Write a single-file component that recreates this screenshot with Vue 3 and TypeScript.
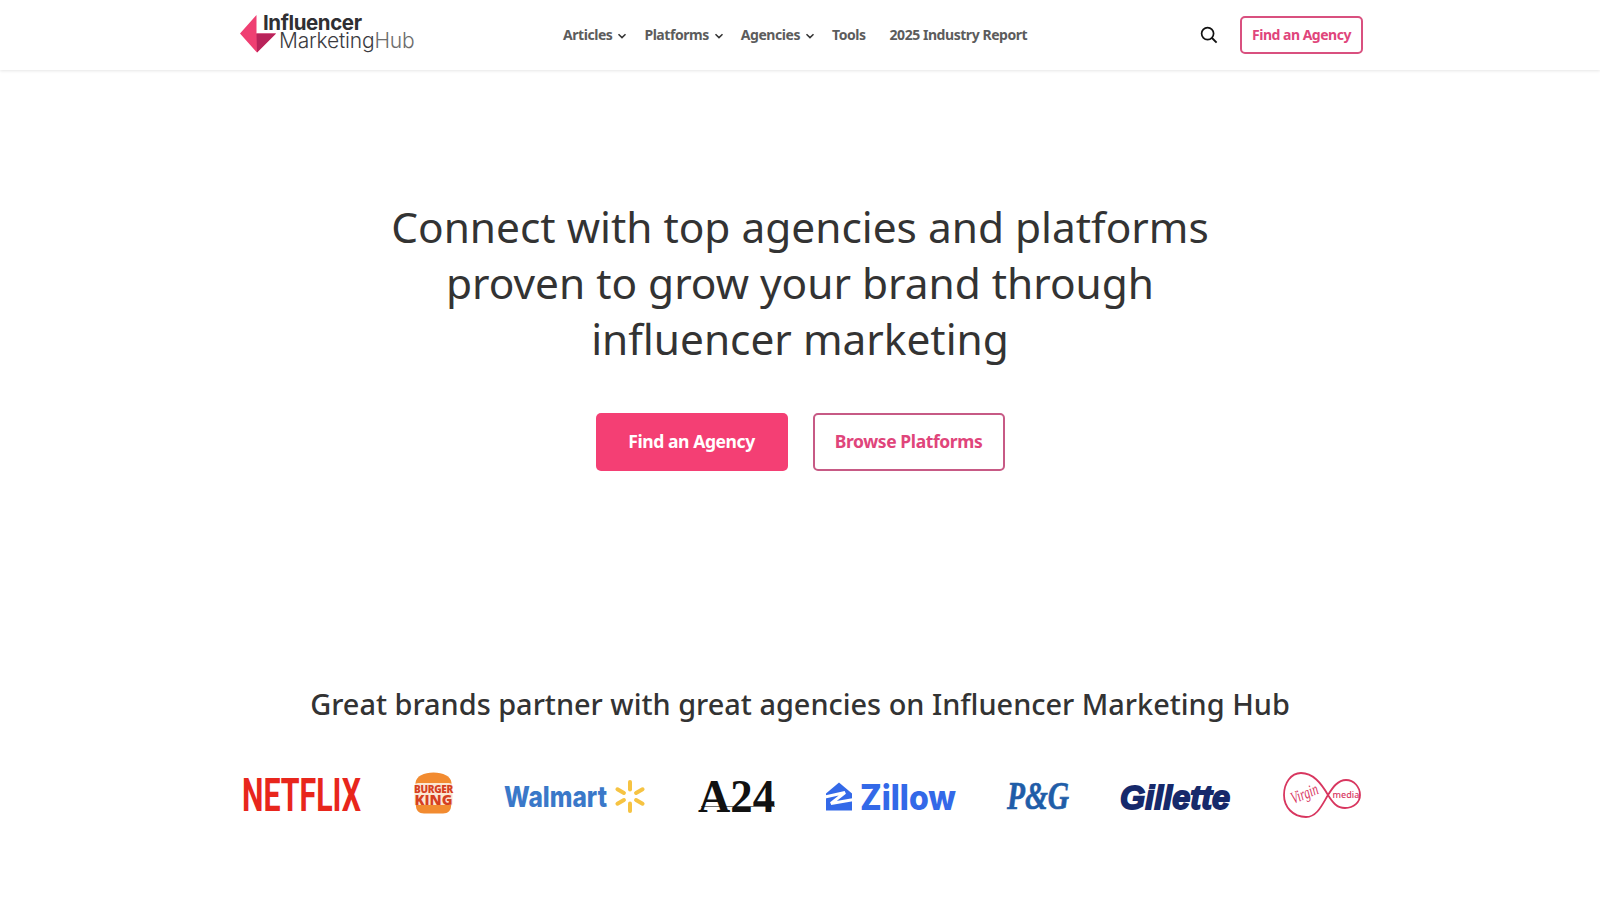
<script setup lang="ts">
interface NavItem { label: string; caret: boolean }
const navItems: NavItem[] = [
  { label: 'Articles', caret: true },
  { label: 'Platforms', caret: true },
  { label: 'Agencies', caret: true },
  { label: 'Tools', caret: false },
  { label: '2025 Industry Report', caret: false },
]
const sparkRays = [0, 60, 120, 180, 240, 300]
</script>

<template>
  <div class="page">
    <header class="topbar">
      <div class="bar-inner">
        <a class="logo" href="#" aria-label="Influencer Marketing Hub">
          <svg width="176" height="42" viewBox="0 0 176 42">
            <polygon points="1,19.500 17.500,1 17.500,19.500 37,19.500 18,38.500" fill="#ef3f72" />
            <polygon points="17.500,19.500 37,19.500 18,38.500" fill="#b8235a" />
            <text class="lg"><tspan x="24" y="15.500" class="lg-top">Influencer</tspan><tspan x="40" y="34" class="lg-bottom">Marketing<tspan fill="#6d6d6d">Hub</tspan></tspan></text>
          </svg>
        </a>
        <nav class="nav">
          <a v-for="item in navItems" :key="item.label" class="nav-link" :class="{ 'has-caret': item.caret }" href="#">
            <span>{{ item.label }}</span>
            <svg v-if="item.caret" class="caret" width="10" height="6" viewBox="0 0 10 6">
              <path d="M1.500 1.200 5 4.600 8.500 1.200" fill="none" stroke="#333" stroke-width="1.500" />
            </svg>
          </a>
        </nav>
        <div class="bar-right">
          <svg class="search" width="18" height="18" viewBox="0 0 18 18">
            <circle cx="7.600" cy="7.600" r="6" fill="none" stroke="#111" stroke-width="1.700" />
            <path d="M12 12 16.600 16.600" stroke="#111" stroke-width="1.900" />
          </svg>
          <a class="btn-small" href="#">Find an Agency</a>
        </div>
      </div>
    </header>

    <section class="hero">
      <h1>Connect with top agencies and platforms<br />proven to grow your brand through<br />influencer marketing</h1>
      <div class="cta">
        <a class="btn btn-solid" href="#">Find an Agency</a>
        <a class="btn btn-outline" href="#">Browse Platforms</a>
      </div>
    </section>

    <section class="brands">
      <h2>Great brands partner with great agencies on Influencer Marketing Hub</h2>
      <div class="logos">
        <svg class="netflix" width="119" height="36" viewBox="0 0 119 36" aria-label="Netflix">
          <text x="2" y="33.500" textLength="119" lengthAdjust="spacingAndGlyphs" class="l-netflix">NETFLIX</text>
        </svg>

        <svg width="39" height="42" viewBox="0 2 39 42" aria-label="Burger King">
          <path d="M1.500 11C2 4 10 0.500 19.500 0.500S37 4 37.500 11C37.500 12.500 36.500 13 35 13H4C2.500 13 1.500 12.500 1.500 11Z" fill="#f28b30" />
          <rect x="0.500" y="11" width="38" height="24" rx="4" fill="#fbe7d2" />
          <path d="M2 33H37C37.500 38 34 41.500 29 41.500H10C5 41.500 1.500 38 2 33Z" fill="#f28b30" />
          <text class="l-bk" text-anchor="middle"><tspan x="19.500" y="20.500" class="l-bk1">BURGER</tspan><tspan x="19.500" y="32.500" class="l-bk2">KING</tspan></text>
        </svg>

        <svg width="143" height="36" viewBox="0 0 143 36" aria-label="Walmart">
          <text x="0" y="29.500" textLength="103" lengthAdjust="spacingAndGlyphs" class="l-walmart">Walmart</text>
          <g transform="translate(126 19.500)">
            <rect v-for="r in sparkRays" :key="r" x="-2" y="-16.500" width="4" height="11.500" rx="2" fill="#f6c342" :transform="`rotate(${r})`" />
          </g>
        </svg>

        <svg width="77" height="36" viewBox="0 0 77 36" aria-label="A24">
          <text x="0" y="35" textLength="77" lengthAdjust="spacingAndGlyphs" class="l-a24">A24</text>
          <path d="M3 29.500H77" stroke="#111" stroke-width="0.600" />
        </svg>

        <svg width="130" height="36" viewBox="0 0 130 36" aria-label="Zillow">
          <g transform="translate(0 2.500)">
            <path d="M13 3 26 14V31H0V14Z" fill="#3369e8" />
            <path d="M-1 17.500 19 13 5 24 28 20" fill="none" stroke="#fff" stroke-width="3" />
          </g>
          <text x="34" y="33" textLength="96" lengthAdjust="spacingAndGlyphs" class="l-zillow">Zillow</text>
        </svg>

        <svg width="62" height="36" viewBox="0 0 62 36" aria-label="P&amp;G">
          <text x="0" y="32" textLength="62" lengthAdjust="spacingAndGlyphs" class="l-pg">P&amp;G</text>
        </svg>

        <svg width="112" height="36" viewBox="0 0 112 36" aria-label="Gillette">
          <text x="0" y="31.500" textLength="110" lengthAdjust="spacingAndGlyphs" class="l-gillette">Gillette</text>
        </svg>

        <svg width="78" height="48" viewBox="0 0 78 48" aria-label="Virgin Media">
          <path d="M45 24C38 12 30 2 18 2 8 2 1 12 1 24 1 36 10 46 23 46 34 46 39 34 45 24 50 16 55 9 63 9 71 9 77 16 77 24 77 31 71 37 62 37 54 37 50 32 45 24Z" fill="none" stroke="#d8365f" stroke-width="1.800" />
          <text x="8" y="28" textLength="28" lengthAdjust="spacingAndGlyphs" transform="rotate(-22 22 24)" class="l-virgin">Virgin</text>
          <text x="63" y="26.500" text-anchor="middle" class="l-media">media</text>
        </svg>
      </div>
    </section>
  </div>
</template>

<style>
html, body { margin: 0; background: #fff; }
</style>

<style scoped>
.page {
  font-family: "Noto Sans", "Open Sans", sans-serif;
  color: #333;
  height: 900px;
  overflow: hidden;
}
a { text-decoration: none; }
.topbar {
  height: 70px;
  box-shadow: 0 1px 3px rgba(0, 0, 0, 0.1);
}
.bar-inner {
  box-sizing: border-box;
  width: 1126px;
  height: 70px;
  margin: 0 auto;
  padding-left: 2px;
  display: flex;
  align-items: center;
}
.logo { display: flex; width: 176px; height: 42px; }
.logo svg { overflow: visible; }
.lg { font-family: "Inter", sans-serif; }
.lg-top { font-size: 20.500px; font-weight: 700; fill: #2f2f33; letter-spacing: -0.4px; }
.lg-bottom { font-size: 21px; font-weight: 300; fill: #3b3b3f; letter-spacing: -0.2px; }
.nav {
  display: flex;
  align-items: center;
  margin-left: 148px;
}
.nav-link {
  display: flex;
  align-items: center;
  color: #5c5c5c;
  font-size: 14px;
  font-weight: 700;
  letter-spacing: -0.45px;
  line-height: 20px;
  margin-right: 24px;
}
.nav-link.has-caret { margin-right: 17px; }
.caret { margin-left: 5px; margin-top: 2px; }
.bar-right {
  margin-left: auto;
  display: flex;
  align-items: center;
  gap: 22px;
}
.search { display: block; }
.btn-small {
  box-sizing: border-box;
  width: 123px;
  height: 38px;
  padding-bottom: 1px;
  display: flex;
  align-items: center;
  justify-content: center;
  border: 2px solid #d9507f;
  border-radius: 5px;
  color: #e0457b;
  font-size: 14px;
  font-weight: 700;
  letter-spacing: -0.5px;
}
.hero {
  text-align: center;
  padding-top: 129px;
}
h1 {
  margin: 0;
  font-size: 42.400px;
  line-height: 56px;
  font-weight: 400;
  color: #333;
}
.cta {
  display: flex;
  justify-content: center;
  gap: 25px;
  margin-top: 46px;
}
.btn {
  box-sizing: border-box;
  width: 192px;
  height: 58px;
  padding-bottom: 2px;
  display: flex;
  align-items: center;
  justify-content: center;
  border-radius: 5px;
  font-size: 17.500px;
  font-weight: 700;
  letter-spacing: -0.4px;
}
.btn-solid { background: #f43f74; color: #fff; }
.btn-outline { border: 2px solid #c75a85; color: #e0457b; }
.brands { text-align: center; padding-top: 213px; }
h2 {
  margin: 0;
  font-size: 28.900px;
  line-height: 40px;
  font-weight: 500;
  color: #333;
}
.logos {
  width: 1124px;
  margin: 47px auto 0;
  display: flex;
  align-items: center;
  justify-content: center;
  gap: 51px;
}
.logos svg { display: block; flex: none; overflow: visible; }
.logos .netflix { margin-right: 4px; }
.l-netflix { font: 700 46px "Roboto", sans-serif; fill: #e8261c; }
.l-bk { font-family: "Open Sans", sans-serif; font-weight: 800; fill: #d6401f; }
.l-bk1 { font-size: 10px; letter-spacing: -0.3px; }
.l-bk2 { font-size: 14.500px; }
.l-walmart { font: 800 29px "Inter", sans-serif; fill: #3a78c9; }
.l-a24 { font: 700 47px "Liberation Serif", serif; fill: #111; }
.l-zillow { font: 800 35px "Inter", sans-serif; fill: #3369e8; }
.l-pg { font: italic 700 41px "Liberation Serif", serif; fill: #1f5da8; stroke: #1f5da8; stroke-width: 0.700px; }
.l-gillette { font: italic 700 34px "Liberation Sans", sans-serif; fill: #16296b; stroke: #16296b; stroke-width: 1.800px; }
.l-virgin { font: italic 400 17px "Liberation Serif", serif; fill: #d8365f; }
.l-media { font: 500 9px "Noto Sans", sans-serif; fill: #d8365f; }
</style>
